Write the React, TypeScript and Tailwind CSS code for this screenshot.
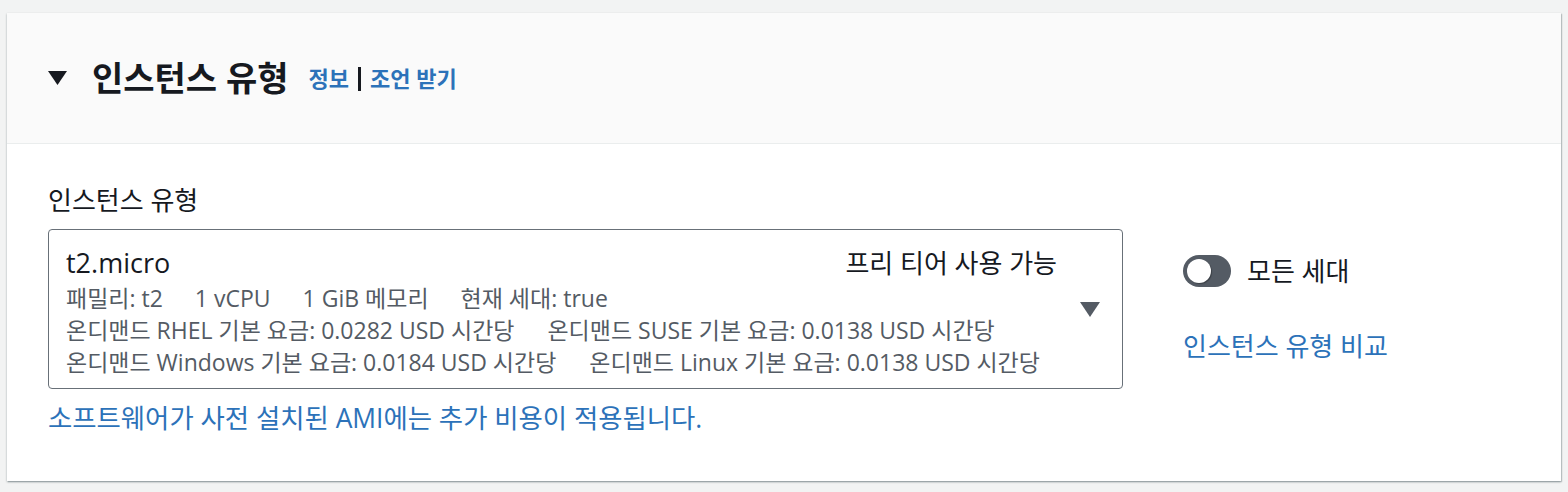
import React from "react";

const font = { fontFamily: '"Open Sans", "Noto Sans CJK KR", sans-serif' };

const App = () => {
  return (
    <div className="w-[1568px] h-[492px] bg-[#f2f3f3] pt-[13px] pl-[7px]" style={font}>
      <section className="w-[1554px] h-[468px] bg-white shadow-[0_1px_2px_rgba(0,28,36,0.35),1px_1px_1px_rgba(0,28,36,0.15)] flex flex-col">
        {/* header */}
        <div className="h-[131px] shrink-0 bg-[#fafafa] border-b border-[#eaeded] flex items-center pl-[41px]">
          <svg viewBox="0 0 19 14" className="w-[19px] h-[14px] mr-[25px]">
            <path d="M0 0h19L9.5 14z" fill="#16191f" />
          </svg>
          <h2 className="text-[34px] font-bold text-[#16191f] leading-none">인스턴스 유형</h2>
          <div className="ml-[20px] text-[22px] font-bold text-[#2c72b9] flex items-center gap-[9px]">
            <span>정보</span>
            <span className="w-[3px] h-[24px] bg-[#16191f] mt-[2px]" />
            <span>조언 받기</span>
          </div>
        </div>

        {/* body */}
        <div className="flex-1 px-[41px] pt-[40px]">
          <div className="text-[26px] text-[#16191f] leading-[32px] mb-[13px]">인스턴스 유형</div>
          <div className="flex">
            <div className="w-[1075px]">
              <div className="h-[160px] border border-[#687078] rounded-[4px] flex pl-[17px] pr-[22px] pt-[14px]">
                <div className="flex-1">
                  <div className="flex justify-between items-center">
                    <span className="text-[27px] text-[#16191f] leading-[38px]">t2.micro</span>
                    <span className="text-[26px] text-[#16191f] leading-[38px]">프리 티어 사용 가능</span>
                  </div>
                  <div className="text-[23px] text-[#545b64] leading-[32px]">
                    <div className="flex gap-[32px]">
                      <span>패밀리: t2</span>
                      <span>1 vCPU</span>
                      <span>1 GiB 메모리</span>
                      <span>현재 세대: true</span>
                    </div>
                    <div className="flex gap-[33px]">
                      <span>온디맨드 RHEL 기본 요금: 0.0282 USD 시간당</span>
                      <span>온디맨드 SUSE 기본 요금: 0.0138 USD 시간당</span>
                    </div>
                    <div className="flex gap-[33px]">
                      <span>온디맨드 Windows 기본 요금: 0.0184 USD 시간당</span>
                      <span>온디맨드 Linux 기본 요금: 0.0138 USD 시간당</span>
                    </div>
                  </div>
                </div>
                <div className="flex items-center ml-[23px] pb-[14px]">
                  <svg viewBox="0 0 20 15" className="w-[20px] h-[15px]">
                    <path d="M0 0h20L10 15z" fill="#545b64" />
                  </svg>
                </div>
              </div>
              <div className="mt-[13px] text-[26.4px] text-[#2c72b9] leading-[32px]">
                소프트웨어가 사전 설치된 AMI에는 추가 비용이 적용됩니다.
              </div>
            </div>

            <div className="ml-[60px] pt-[26px]">
              <div className="flex items-center gap-[16px]">
                <div className="w-[48px] h-[32px] rounded-full bg-[#545b64] relative">
                  <div className="absolute left-[4px] top-[4px] w-[24px] h-[24px] rounded-full bg-white shadow-[1px_1px_1px_rgba(0,0,0,0.3)]" />
                </div>
                <span className="text-[26px] text-[#16191f] leading-[32px]">모든 세대</span>
              </div>
              <div className="mt-[43px] text-[26px] text-[#2c72b9] leading-[32px]">인스턴스 유형 비교</div>
            </div>
          </div>
        </div>
      </section>
    </div>
  );
};

export default App;
